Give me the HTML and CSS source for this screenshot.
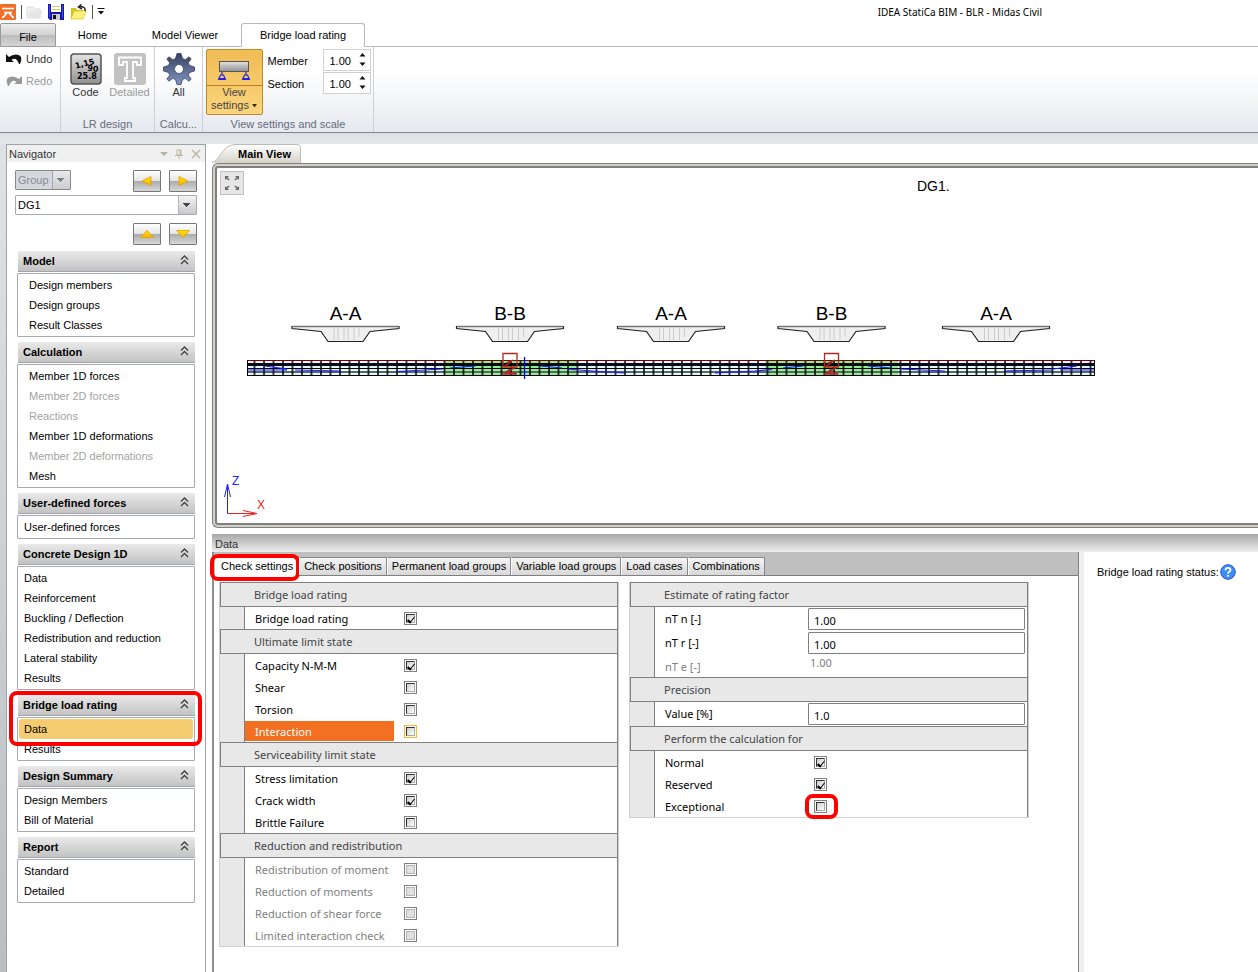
FILE: index.html
```html
<!DOCTYPE html>
<html lang="en">
<head>
<meta charset="utf-8">
<title>IDEA StatiCa BIM - BLR - Midas Civil</title>
<link rel="stylesheet" href="styles.css">
</head>
<body>
<svg class="defs" width="0" height="0" aria-hidden="true">
  <defs>
    <linearGradient id="steel" x2="0" y2="1"><stop offset="0" stop-color="#e4e4e4"/><stop offset="1" stop-color="#909090"/></linearGradient>
    <linearGradient id="gearfill" x2="0" y2="1"><stop offset="0" stop-color="#39425c"/><stop offset="1" stop-color="#8094c4"/></linearGradient>
    <linearGradient id="gold" x2="0" y2="1"><stop offset="0" stop-color="#ffe200"/><stop offset="1" stop-color="#f9b400"/></linearGradient>
    <linearGradient id="tabfill" x2="0" y2="1"><stop offset="0" stop-color="#ffffff"/><stop offset="1" stop-color="#d6d2c8"/></linearGradient>
    <pattern id="mesh" x="244" y="360" width="9.5" height="16" patternUnits="userSpaceOnUse"><path d="M1 0V16" stroke="#000" stroke-width="1.500"/></pattern>
    <g id="section">
      <path d="M-53.500 35.500H53.500V37.500L24.500 40.500L17.500 50.500H-17.500L-24.500 40.500L-53.500 37.500Z" transform="translate(0 -35)" fill="#efefef" stroke="#222" stroke-width="1.200"/>
      <path d="M-53 0.500H53" stroke="#777" stroke-width="1.500"/>
      <path d="M-11.500 2V14M-7.500 2V14M-1.500 2V14M2.500 2V14M8.500 2V14M13.500 2V11" stroke="#ccc"/>
    </g>
    <g id="spring" fill="none" stroke="#b02a22" stroke-width="1.300">
      <path d="M-7 -6.500H7V7H-7ZM-4 3L3 0L-5 6L4 8L-4 13H6M-8 14H7M0 9L-5 13"/>
    </g>
    <symbol id="chev" viewBox="0 0 9 10"><path d="M1 4.500L4.500 1L8 4.500M1 9L4.500 5.500L8 9" fill="none" stroke="#444" stroke-width="1.400"/></symbol>
  </defs>
</svg>

<header class="titlebar">
  <svg width="16" height="16" viewBox="0 0 16 16"><rect width="16" height="16" rx="1" fill="#f0702a"/><path d="M2 4.500H14M2 13.500C5 13.500 5.500 8.500 8 8.500S11 13.500 14 13.500M4 8.500H12" fill="none" stroke="#fff" stroke-width="1.700"/></svg>
  <i class="sep"></i>
  <svg width="17" height="16" viewBox="0 0 17 16"><path d="M1 3H7L9 5H14V14H1Z" fill="#f0f0f0" stroke="#ddd"/><path d="M1 14L4 7H17L14 14Z" fill="#e6e6e6"/></svg>
  <svg class="save" width="16" height="16" viewBox="0 0 16 16"><path d="M0 0H16V16H2L0 14Z" fill="#1717a8"/><path d="M1 1H2V13H1ZM14 1H15V14H14Z" fill="#3848ff"/><rect x="3" width="10" height="8" fill="#fff"/><path d="M4 2.500H12M4 5.500H12" stroke="#d8c860"/><rect x="4" y="10" width="8" height="6" fill="#ccc"/><rect x="5" y="11" width="3" height="4" fill="#111"/></svg>
  <svg width="17" height="16" viewBox="0 0 17 16"><path d="M1 4H6L7 6H13V15H1Z" fill="#d9c020"/><path d="M1 15L4 7H16L13 15Z" fill="#fff27a" stroke="#d9c020" stroke-width=".7"/><path d="M15 7Q16 2 9 3M11.500 0.500L8.500 3L12 5" fill="none" stroke="#222" stroke-width="1.500"/></svg>
  <i class="sep"></i>
  <svg width="8" height="7" viewBox="0 0 8 7"><path d="M0.500 0.500H7.500" stroke="#111"/><path d="M1 3H7L4 6.500Z" fill="#111"/></svg>
  <span class="caption">IDEA StatiCa BIM - BLR - Midas Civil</span>
</header>

<nav class="ribbon-tabs">
  <button class="file-tab">File</button>
  <button class="home-tab">Home</button>
  <button class="viewer-tab">Model Viewer</button>
  <button class="rating-tab active">Bridge load rating</button>
</nav>

<section class="ribbon">
  <div class="group history">
    <button class="small"><svg width="16" height="16" viewBox="0 0 16 16"><path d="M0 3V11H8L5.500 9Q10 5 13 13H14Q18 4 10 3.500Q6 3.500 3 6Z" fill="#111"/></svg>Undo</button>
    <button class="small" disabled><svg width="16" height="16" viewBox="0 0 16 16"><path d="M16 3V11H8L10.500 9Q6 5 3 13H2Q-2 4 6 3.500Q10 3.500 13 6Z" fill="#999"/></svg>Redo</button>
  </div>
  <div class="group design">
    <div class="tools">
      <button class="tool"><svg width="32" height="32" viewBox="0 0 32 32"><rect x="1" y="1" width="30" height="30" rx="3" fill="url(#steel)" stroke="#555" stroke-width="1.500"/><g font-family="DejaVu Sans" font-weight="bold" font-size="8"><text x="5" y="14" transform="rotate(-14 12 12)">1,15</text><text x="17" y="18" transform="rotate(8 20 18)">90</text><text x="7" y="26">25.8</text></g></svg>Code</button>
      <button class="tool" disabled><svg width="32" height="32" viewBox="0 0 32 32"><rect width="32" height="32" rx="3" fill="#c2c2c2"/><path d="M5 4.500H27V12H23V9H19V25H21V28H11V25H13V9H9V12H5Z" fill="#c2c2c2" stroke="#fff" stroke-width="1.800"/></svg>Detailed</button>
    </div>
    <span class="group-name">LR design</span>
  </div>
  <div class="group calc">
    <div class="tools"><button class="tool"><svg width="32" height="32" viewBox="-16 -16 32 32"><g fill="url(#gearfill)" stroke="#39435c" stroke-width=".8"><path fill-rule="evenodd" d="M-2 -15.500H2L3.500 -10.500L6.300 -9.300L10 -12.200L12.200 -10L9.300 -6.300L10.500 -3.500L15.500 -2V2L10.500 3.500L9.300 6.300L12.200 10L10 12.200L6.300 9.300L3.500 10.500L2 15.500H-2L-3.500 10.500L-6.300 9.300L-10 12.200L-12.200 10L-9.300 6.300L-10.500 3.500L-15.500 2V-2L-10.500 -3.500L-9.300 -6.300L-12.200 -10L-10 -12.200L-6.300 -9.300L-3.500 -10.500ZM-4.500 0A4.500 4.500 0 1 0 4.500 0A4.500 4.500 0 1 0 -4.500 0Z"/></g></svg>All</button></div>
    <span class="group-name">Calcu...</span>
  </div>
  <div class="group view">
    <div class="tools">
      <button class="view-btn">
        <span class="view-icon"><svg width="32" height="22" viewBox="0 0 32 22"><rect x="1.500" y="2.500" width="29" height="10" fill="url(#steel)" stroke="#555"/><g fill="none" stroke="#22e" stroke-width="1.200"><path d="M4 13V16M2.500 16H5.500L7 19.500H1ZM28 13V16M26.500 16H29.500L31 19.500H25ZM0 20.500H8M24 20.500H32"/></g></svg></span>
        <span class="view-text">View<br>settings <svg width="5" height="4" viewBox="0 0 5 4"><path d="M0 0H5L2.500 3.500Z" fill="#333"/></svg></span>
      </button>
      <div class="spins">
        <label for="member">Member</label><span class="spin"><input id="member" value="1.00"><svg width="7" height="16" viewBox="0 0 7 16"><path d="M0.500 4.500L3.500 1L6.500 4.500ZM0.500 10.500L3.500 14L6.500 10.500Z" fill="#111"/></svg></span>
        <label for="sect">Section</label><span class="spin"><input id="sect" value="1.00"><svg width="7" height="16" viewBox="0 0 7 16"><path d="M0.500 4.500L3.500 1L6.500 4.500ZM0.500 10.500L3.500 14L6.500 10.500Z" fill="#111"/></svg></span>
      </div>
    </div>
    <span class="group-name">View settings and scale</span>
  </div>
</section>

<main class="workspace">
  <aside class="navigator">
    <div class="nav-title"><span>Navigator</span>
      <svg width="41" height="10" viewBox="0 0 41 10"><path d="M0 3H8L4 7Z" fill="#b9b49a"/><path d="M17 1H21V6H17ZM15 6.500H23M19 7V10M20 1V6" fill="none" stroke="#b9b49a"/><path d="M32 1L40 9M40 1L32 9" stroke="#b9b49a" stroke-width="1.200"/></svg>
    </div>
    <div class="nav-body">
      <div class="picker">
        <span class="combo group-combo"><select aria-label="Group" disabled><option>Group</option></select></span>
        <button class="arrow" aria-label="Previous"><svg width="12" height="10" viewBox="0 0 12 10"><path d="M1 5L10 0.500V9.500Z" fill="url(#gold)" stroke="#e0a000" stroke-width=".8"/></svg></button>
        <button class="arrow" aria-label="Next"><svg width="12" height="10" viewBox="0 0 12 10"><path d="M11 5L2 0.500V9.500Z" fill="url(#gold)" stroke="#e0a000" stroke-width=".8"/></svg></button>
      </div>
      <span class="combo member-combo"><select aria-label="Design group"><option>DG1</option></select></span>
      <div class="picker second">
        <button class="arrow" aria-label="Up"><svg width="14" height="8" viewBox="0 0 14 8"><path d="M0.500 7.500H13.500L7 0.500Z" fill="url(#gold)" stroke="#e0a000" stroke-width=".8"/></svg></button>
        <button class="arrow" aria-label="Down"><svg width="14" height="8" viewBox="0 0 14 8"><path d="M0.500 0.500H13.500L7 7.500Z" fill="url(#gold)" stroke="#e0a000" stroke-width=".8"/></svg></button>
      </div>
      <section class="nav-section indent"><h2>Model<svg width="9" height="10"><use href="#chev"/></svg></h2>
        <div class="list"><a href="#">Design members</a><a href="#">Design groups</a><a href="#">Result Classes</a></div></section>
      <section class="nav-section indent"><h2>Calculation<svg width="9" height="10"><use href="#chev"/></svg></h2>
        <div class="list"><a href="#">Member 1D forces</a><a href="#" class="off">Member 2D forces</a><a href="#" class="off">Reactions</a><a href="#">Member 1D deformations</a><a href="#" class="off">Member 2D deformations</a><a href="#">Mesh</a></div></section>
      <section class="nav-section"><h2>User-defined forces<svg width="9" height="10"><use href="#chev"/></svg></h2>
        <div class="list"><a href="#">User-defined forces</a></div></section>
      <section class="nav-section"><h2>Concrete Design 1D<svg width="9" height="10"><use href="#chev"/></svg></h2>
        <div class="list"><a href="#">Data</a><a href="#">Reinforcement</a><a href="#">Buckling / Deflection</a><a href="#">Redistribution and reduction</a><a href="#">Lateral stability</a><a href="#">Results</a></div></section>
      <section class="nav-section"><h2>Bridge load rating<svg width="9" height="10"><use href="#chev"/></svg></h2>
        <div class="list"><a href="#" class="selected">Data</a><a href="#">Results</a></div><i class="mark nav-mark"></i></section>
      <section class="nav-section"><h2>Design Summary<svg width="9" height="10"><use href="#chev"/></svg></h2>
        <div class="list"><a href="#">Design Members</a><a href="#">Bill of Material</a></div></section>
      <section class="nav-section"><h2>Report<svg width="9" height="10"><use href="#chev"/></svg></h2>
        <div class="list"><a href="#">Standard</a><a href="#">Detailed</a></div></section>
    </div>
  </aside>

  <div class="content">
    <button class="doc-tab"><svg width="89" height="19" viewBox="0 0 89 19"><path d="M0 19C8 17 10 1 23 0.500H85Q88.500 0.500 88.500 4V19Z" fill="url(#tabfill)"/><path d="M0 18.500C8 17 10 1 23 0.500H85Q88.500 0.500 88.500 4V19" fill="none" stroke="#bbb"/></svg><span>Main View</span></button>
    <div class="doc">
      <button class="fit" aria-label="Zoom to fit"><svg width="18" height="18" viewBox="0 0 18 18"><path d="M2 2H6L2 6ZM16 2H12L16 6ZM2 16H6L2 12ZM16 16H12L16 12Z" fill="#666"/><path d="M3 3L6 6M15 3L12 6M3 15L6 12M15 15L12 12" stroke="#666" stroke-width="1.500"/></svg></button>
      <svg class="drawing" height="355" viewBox="217 168 1041 355" preserveAspectRatio="xMinYMin meet">
        <g font-family="Liberation Sans, sans-serif">
          <text x="917" y="191" font-size="14">DG1.</text>
          <g font-size="19" text-anchor="middle"><text x="345.500" y="320">A-A</text><text x="510" y="320">B-B</text><text x="671" y="320">A-A</text><text x="831.500" y="320">B-B</text><text x="996" y="320">A-A</text></g>
        </g>
        <use href="#section" x="345.500" y="326"/><use href="#section" x="510" y="326"/><use href="#section" x="671" y="326"/><use href="#section" x="831.500" y="326"/><use href="#section" x="996" y="326"/>
        <rect x="247" y="360" width="848" height="16" fill="#e4f6fc"/>
        <path d="M444 360H577V376H444ZM765 360H898V376H765Z" fill="#90ee90"/>
        <path d="M247 372H1095" stroke="#586a66" stroke-width="2"/>
        <path d="M247 364.500H1095" stroke="#080818" stroke-width="3"/>
        <path d="M247 368.500H1095M247 375.500H1095" stroke="#000"/>
        <rect x="251" y="360" width="844" height="16" fill="url(#mesh)"/>
        <path d="M247 360.500H1095" stroke="#700"/>
        <path d="M247.500 361V376M1094.500 361V376" stroke="#000"/>
        <path d="M265 366L287 369M248 370H287M295 370L340 371M397 371.500L443 369M450 368L475 366M540 366L562 368M567 369L592 371L625 373M715 373L755 371L772 369.500M783 368L803 366M868 366L892 368M900 369L945 371M1005 371L1052 370M1053 369L1077 366M1060 370H1094" fill="none" stroke="#1a1aff" stroke-width="1.200"/>
        <use href="#spring" x="510" y="360"/><use href="#spring" x="831.500" y="360"/>
        <path d="M524.500 357V379" stroke="#00f" stroke-width="1.300"/>
        <g fill="none"><path d="M227.500 513V484M224.500 497L227.500 484L230.500 497" stroke="#22f"/><path d="M227 513.500H257M243 510.500L257 513.500L243 516.500" stroke="#e22"/></g>
        <g font-family="Liberation Sans, sans-serif" font-size="12"><text x="232" y="485" fill="#22f">Z</text><text x="257" y="509" fill="#e22">X</text></g>
      </svg>
    </div>

    <h1 class="data-title">Data</h1>
    <div class="data-area">
      <div class="data-pane">
        <nav class="tabs">
          <button class="active">Check settings<i class="mark tab-mark"></i></button><button>Check positions</button><button>Permanent load groups</button><button>Variable load groups</button><button>Load cases</button><button>Combinations</button>
        </nav>
        <div class="grids">
          <div class="grid">
            <h3>Bridge load rating</h3>
            <div class="rows"><div class="row"><label for="a1">Bridge load rating</label><input type="checkbox" id="a1" checked></div></div>
            <h3>Ultimate limit state</h3>
            <div class="rows">
              <div class="row"><label for="a2">Capacity N-M-M</label><input type="checkbox" id="a2" checked></div>
              <div class="row"><label for="a3">Shear</label><input type="checkbox" id="a3"></div>
              <div class="row"><label for="a4">Torsion</label><input type="checkbox" id="a4"></div>
              <div class="row current"><label for="a5">Interaction</label><input type="checkbox" id="a5"></div>
            </div>
            <h3>Serviceability limit state</h3>
            <div class="rows">
              <div class="row"><label for="a6">Stress limitation</label><input type="checkbox" id="a6" checked></div>
              <div class="row"><label for="a7">Crack width</label><input type="checkbox" id="a7" checked></div>
              <div class="row"><label for="a8">Brittle Failure</label><input type="checkbox" id="a8"></div>
            </div>
            <h3>Reduction and redistribution</h3>
            <div class="rows">
              <div class="row off"><label for="a9">Redistribution of moment</label><input type="checkbox" id="a9" disabled></div>
              <div class="row off"><label for="a10">Reduction of moments</label><input type="checkbox" id="a10" disabled></div>
              <div class="row off"><label for="a11">Reduction of shear force</label><input type="checkbox" id="a11" disabled></div>
              <div class="row off"><label for="a12">Limited interaction check</label><input type="checkbox" id="a12" disabled></div>
            </div>
          </div>
          <div class="grid">
            <h3>Estimate of rating factor</h3>
            <div class="rows">
              <div class="row field"><label for="b1">nT n [-]</label><input type="text" id="b1" value="1.00"></div>
              <div class="row field"><label for="b2">nT r [-]</label><input type="text" id="b2" value="1.00"></div>
              <div class="row off"><label for="b3">nT e [-]</label><output id="b3">1.00</output></div>
            </div>
            <h3>Precision</h3>
            <div class="rows"><div class="row field"><label for="b4">Value [%]</label><input type="text" id="b4" value="1.0"></div></div>
            <h3>Perform the calculation for</h3>
            <div class="rows">
              <div class="row"><label for="b5">Normal</label><input type="checkbox" id="b5" checked></div>
              <div class="row"><label for="b6">Reserved</label><input type="checkbox" id="b6" checked></div>
              <div class="row"><label for="b7">Exceptional</label><input type="checkbox" id="b7"><i class="mark box-mark"></i></div>
            </div>
          </div>
        </div>
      </div>
      <div class="status"><span>Bridge load rating status:</span>
        <svg width="16" height="16" viewBox="0 0 16 16"><circle cx="8" cy="8" r="7.300" fill="#3d8ef8" stroke="#2458d0"/><path d="M5.500 6.200Q5.500 3.800 8 3.800T10.500 6Q10.500 7 9.200 7.800Q8 8.500 8 9.800M8 11V12.800" fill="none" stroke="#fff" stroke-width="1.800"/></svg></div>
    </div>
  </div>
</main>
</body>
</html>
```
FILE: styles.css
```css
* { box-sizing: border-box; }
body {
  margin: 0;
  min-height: 100vh;
  display: flex;
  flex-direction: column;
  background: #fff;
  color: #000;
  font: 11px/14px "Liberation Sans", Arial, sans-serif;
}
button, input, select { font: inherit; color: inherit; margin: 0; padding: 0; border: 0; background: none; }
svg { flex: none; display: block; }
.defs { position: absolute; }
a { color: inherit; text-decoration: none; }

.titlebar { display: flex; align-items: center; height: 23px; flex: none; }
.titlebar .sep { width: 1px; height: 14px; background: #555; margin: 0 4px 0 5px; }
.titlebar .save { margin: 0 6px 0 5px; }
.caption { margin-left: auto; margin-right: 216px; font: 10px/14px "Noto Sans", sans-serif; }

.ribbon-tabs { display: flex; height: 24px; flex: none; position: relative; z-index: 1; }
.ribbon-tabs button { border-bottom: 1px solid #b5b9bf; }
.ribbon-tabs::after { content: ""; flex: 1; border-bottom: 1px solid #b5b9bf; }
.ribbon-tabs .file-tab { width: 56px; padding-top: 3px; border: 1px solid #999; border-radius: 2px 2px 0 0; background: linear-gradient(#ececec, #d2d2d2 50%, #bcbcbc 50%, #d4d4d4); }
.home-tab { width: 73px; }
.viewer-tab { width: 112px; }
.ribbon-tabs .active { width: 124px; border: 1px solid #b5b9bf; border-bottom-color: #fff; border-radius: 3px 3px 0 0; background: #fff; }

.ribbon { display: flex; height: 86px; flex: none; border-bottom: 1px solid #80858c; background: linear-gradient(#fff, #fff 30%, #e6e9ee); }
.group { display: flex; flex-direction: column; justify-content: space-between; border-right: 1px solid #cdd1d7; padding: 2px 3px 0; }
.history { width: 61px; justify-content: flex-start; gap: 6px; padding: 4px 6px; }
.design { width: 94px; }
.calc { width: 48px; }
.view { width: 171px; }
.group-name { text-align: center; color: #646b7d; line-height: 16px; }
.small { display: flex; align-items: center; gap: 4px; color: #333; }
.small:disabled, .tool:disabled { color: #999; }
.tools { display: flex; justify-content: center; }
.tool { width: 44px; flex: none; padding-top: 4px; display: flex; flex-direction: column; align-items: center; color: #333; }
.view-btn { width: 57px; height: 66px; flex: none; border: 1px solid #c08a2c; border-radius: 2px; background: linear-gradient(#f0bc55, #fbd57c); color: #444; }
.view-icon { display: flex; justify-content: center; align-items: flex-end; height: 36px; padding-bottom: 4px; border-bottom: 1px solid #c07c20; }
.view-text { display: block; height: 28px; line-height: 13px; }
.view-text svg { display: inline-block; vertical-align: middle; }
.spins { display: grid; grid-template-columns: 55px 48px; row-gap: 1px; align-content: start; align-items: center; margin-left: 5px; }
.spins label { padding-top: 2px; }
.spin { display: flex; align-items: center; height: 22px; border: 1px solid #d0d0d0; background: #fff; padding: 0 4px 0 6px; }
.spin input { width: 29px; padding-top: 2px; }

.workspace { flex: 1; display: flex; gap: 6px; padding: 11px 0 0 6px; background: linear-gradient(#dde1e5, #e4e7ea) top / 100% 11px no-repeat, linear-gradient(#e0e3e6, #b9bec3) left / 7px 100% no-repeat; }
.navigator { width: 200px; flex: none; border: 1px solid #a0a4a8; border-bottom: 0; background: #fff; }
.nav-title { display: flex; justify-content: space-between; align-items: center; height: 17px; padding: 0 4px 0 2px; background: #f0f0f0; color: #333; }
.nav-body { padding: 8px; }
.picker { display: flex; gap: 8px; }
.picker.second { justify-content: flex-end; margin: 8px 0 6px; }
.arrow { width: 28px; height: 22px; display: grid; place-items: center; border: 1px solid #777; border-radius: 1px; background: linear-gradient(#fff, #e4e4e4 50%, #aaa 50%, #d8d8d8); }
.combo { display: flex; position: relative; height: 20px; }
.combo select { appearance: none; width: 100%; padding-left: 2px; border: 1px solid #a7abb0; border-radius: 1px; background: #fff; }
.combo::after { content: ""; position: absolute; right: 1px; top: 1px; bottom: 1px; width: 17px; pointer-events: none; border-left: 1px solid #b0b3b8; background: linear-gradient(#444, #444) 4px 7px / 7px 1px no-repeat, linear-gradient(#444, #444) 5px 8px / 5px 1px no-repeat, linear-gradient(#444, #444) 6px 9px / 3px 1px no-repeat, linear-gradient(#444, #444) 7px 10px / 1px 1px no-repeat, linear-gradient(#f4f4f4, #c8c8cc); }
.group-combo { width: 56px; margin-right: auto; }
.group-combo select { background: #d5d6de; border-color: #888; color: #8a8a8e; opacity: 1; }
.group-combo::after { border-left-color: #888; opacity: .6; }
.member-combo { margin-top: 3px; }

.nav-section { position: relative; margin: 0 2px 5px; }
.nav-section h2 { display: flex; justify-content: space-between; align-items: center; margin: 0 0 1px 1px; padding: 0 6px 0 5px; height: 21px; font-size: 11px; line-height: 14px; background: linear-gradient(#e9e9e9, #c3c3c3); border-bottom: 1px solid #a2a5ad; }
.nav-section h2 svg { margin-bottom: 2px; }
.list { border: 1px solid #a6aab2; border-radius: 1px; padding: 1px; background: #fff; }
.list a { display: block; line-height: 20px; padding-left: 5px; }
.indent .list a { padding-left: 10px; }
.list .off { color: #a3a3a3; }
.list .selected { background: #f5cd70; border-radius: 3px; }
.mark { position: absolute; border: 4px solid #f00; border-radius: 8px; pointer-events: none; }
.nav-mark { left: -8px; right: -7px; top: -4px; height: 55px; }

.content { flex: 1; min-width: 0; display: flex; flex-direction: column; background: #fff; }
.doc-tab { position: relative; width: 89px; height: 19px; flex: none; font-weight: bold; text-align: left; }
.doc-tab svg { position: absolute; inset: 0; }
.doc-tab span { position: relative; padding-left: 26px; }
.doc { position: relative; border: 1px solid #808080; border-right: 0; border-radius: 6px 0 0 6px; background: #d4d0c8; padding: 2px 0 2px 2px; margin-bottom: 6px; flex: none; }
.drawing { width: 100%; height: 359px; border: 2px solid #808080; border-right: 0; border-radius: 3px 0 0 3px; background: #fff; }
.fit { position: absolute; left: 7px; top: 7px; width: 24px; height: 24px; display: grid; place-items: center; border: 1px solid #c0c0c0; background: #e6e6e6; }

.data-title { margin: 0; padding: 0 3px; height: 18px; flex: none; font-size: 11px; font-weight: normal; line-height: 20px; color: #333; background: linear-gradient(#a8a8a8, #eee); }
.data-area { flex: 1; display: flex; }
.data-pane { flex: 1; min-width: 0; border-left: 2px solid #8f8f8f; border-right: 1px solid #808080; }
.tabs { display: flex; align-items: flex-end; height: 24px; background: #bfbfbf; border-bottom: 1px solid #808080; padding-left: 1px; }
.tabs button { position: relative; height: 18px; padding: 0 4px 1px; border: 1px solid #888; border-bottom: 0; border-left-color: #fff; border-radius: 2px 2px 0 0; background: linear-gradient(#f4f4f4, #d8d8d8); white-space: nowrap; }
.tabs .active { background: #fff; height: 20px; margin-bottom: -1px; padding: 0 5px 1px; }
.tab-mark { left: -6px; right: -2px; top: -3px; height: 27px; }

.grids { display: flex; gap: 10px; align-items: flex-start; padding: 6px 5px; }
.grid { width: 400px; border: 1px solid #d0d0d0; border-top: 0; background: #e8e8e8; font: 11px/16px "Noto Sans", sans-serif; }
.grid h3 { margin: 0; height: 25px; padding-left: 33px; border: 1px solid #808080; font-size: 11px; font-weight: normal; line-height: 24px; color: #444; }
.rows { margin-left: 24px; border: solid #808080; border-width: 0 1px; background: #fff; }
.row { position: relative; display: flex; align-items: center; height: 22px; }
.row label { width: 149px; margin-right: 10px; padding: 2px 0 0 10px; line-height: 18px; }
.row.field { height: 24px; }
.row.field label { margin-right: 4px; padding-top: 0; }
.row.field input { flex: 1; min-width: 0; height: 22px; margin-right: 2px; border: 1px solid #808080; border-radius: 1px; padding: 2px 5px 0; }
.row.off { color: #808080; }
.row output { align-self: flex-start; margin-left: -4px; }
.current label { background: #f36f21; color: #fff; }
input[type="checkbox"] { appearance: none; position: relative; width: 13px; height: 13px; flex: none; border: 1px solid #808080; background: #fff; }
input[type="checkbox"]::before { content: ""; position: absolute; inset: 1px; border: 1px solid #333; border-right-color: #aaa; border-bottom-color: #aaa; background: linear-gradient(135deg, #ccc, #fff); }
input[type="checkbox"]:checked::after { content: ""; position: absolute; left: 4px; top: 2px; width: 3px; height: 6px; border: solid #000; border-width: 0 1px 2px 0; transform: rotate(38deg); }
input[type="checkbox"]:disabled::before { border-color: #b5b5b5; background: #e0e0e0; }
.current input[type="checkbox"] { border-color: #f5bd25; }
.row .box-mark { left: 150px; top: -1px; width: 33px; height: 25px; }
.status { width: 179px; flex: none; display: flex; align-items: flex-start; gap: 1px; padding: 12px 13px; border-left: 5px solid #f0f0f0; }
.status span { line-height: 16px; white-space: nowrap; }
```
